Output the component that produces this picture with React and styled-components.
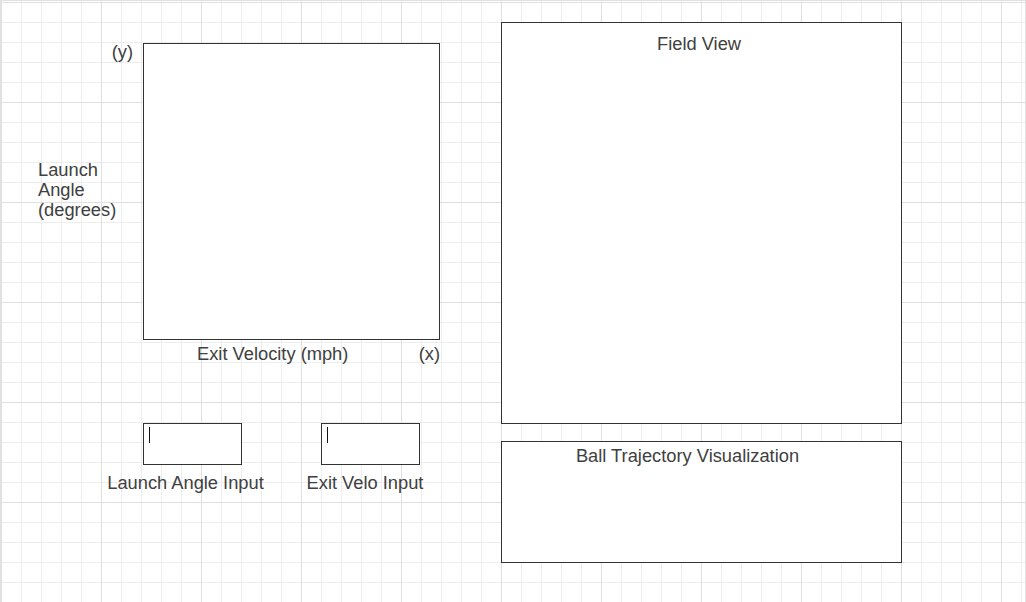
import React from 'react';
import styled, {createGlobalStyle} from 'styled-components';

const GlobalStyle = createGlobalStyle`
  html, body {
    margin: 0;
    padding: 0;
    background: #fff;
  }
  body {
    font-family: "Liberation Sans", Arial, Helvetica, sans-serif;
    color: #404040;
  }
`

const App = () => {
    return (
        <>
            <GlobalStyle/>
            <Page>
                <LeftColumn>
                    <ChartArea>
                        <YAxis>
                            <AxisMark>(y)</AxisMark>
                            <YTitle>Launch<br/>Angle<br/>(degrees)</YTitle>
                        </YAxis>
                        <Plot/>
                    </ChartArea>
                    <XAxis>
                        <XTitle>Exit Velocity (mph)</XTitle>
                        <XMark>(x)</XMark>
                    </XAxis>
                    <InputsRow>
                        <InputGroup>
                            <InputBox><Caret/></InputBox>
                            <InputLabel>Launch Angle Input</InputLabel>
                        </InputGroup>
                        <InputGroup>
                            <InputBox><Caret/></InputBox>
                            <InputLabel $shift={10}>Exit Velo Input</InputLabel>
                        </InputGroup>
                    </InputsRow>
                </LeftColumn>
                <RightColumn>
                    <Panel $height={402}>
                        <PanelTitle $top={11} $shift={5}>Field View</PanelTitle>
                    </Panel>
                    <Panel $height={122}>
                        <PanelTitle $top={4} $shift={28}>Ball Trajectory Visualization</PanelTitle>
                    </Panel>
                </RightColumn>
            </Page>
        </>
    );
};

export default App;

const Page = styled.div`
  box-sizing: border-box;
  width: 1026px;
  height: 602px;
  display: flex;
  align-items: flex-start;
  border: 1px solid #e2e2e2;
  border-bottom: none;
  font-size: 18.3px;
  line-height: 20px;
  background-color: #fff;
  background-image: linear-gradient(to right, #e0e0e0 1px, transparent 1px),
  linear-gradient(to bottom, #e0e0e0 1px, transparent 1px),
  linear-gradient(to right, #ededed 1px, transparent 1px),
  linear-gradient(to bottom, #ededed 1px, transparent 1px);
  background-size: 100px 100px, 100px 100px, 20px 20px, 20px 20px;
  background-position: 0 1px;
  overflow: hidden;
`

const LeftColumn = styled.div`
  box-sizing: border-box;
  width: 500px;
  padding: 41px 0 0 37px;
  display: flex;
  flex-direction: column;
`

const ChartArea = styled.div`
  display: grid;
  grid-template-columns: 105px 297px;
  align-items: start;
`

const YAxis = styled.div`
  display: flex;
  flex-direction: column;
`

const AxisMark = styled.div`
  text-align: right;
  padding-right: 10px;
`

const YTitle = styled.div`
  margin-top: 98px;
`

const Plot = styled.div`
  box-sizing: border-box;
  width: 297px;
  height: 297px;
  margin-top: 1px;
  border: 1px solid #333;
  background: #fff;
`

const XAxis = styled.div`
  display: flex;
  width: 297px;
  margin: 4px 0 0 105px;
`

const XTitle = styled.div`
  padding-left: 54px;
`

const XMark = styled.div`
  margin-left: auto;
`

const InputsRow = styled.div`
  display: flex;
  margin: 59px 0 0 65px;
`

const InputGroup = styled.div`
  width: 178px;
  display: flex;
  flex-direction: column;
  align-items: center;
`

const InputBox = styled.div`
  box-sizing: border-box;
  width: 99px;
  height: 42px;
  padding: 3px 0 0 5px;
  border: 1px solid #333;
  background: #fff;
`

const Caret = styled.span`
  display: block;
  width: 1px;
  height: 16px;
  background: #111;
`

const InputLabel = styled.div`
  margin-top: 8px;
  margin-right: ${p => p.$shift ?? 13}px;
  white-space: nowrap;
`

const RightColumn = styled.div`
  width: 401px;
  padding-top: 21px;
  display: flex;
  flex-direction: column;
  gap: 17px;
`

const Panel = styled.div`
  box-sizing: border-box;
  height: ${p => p.$height}px;
  border: 1px solid #333;
  background: #fff;
`

const PanelTitle = styled.div`
  padding: ${p => p.$top}px ${p => p.$shift}px 0 0;
  text-align: center;
`
